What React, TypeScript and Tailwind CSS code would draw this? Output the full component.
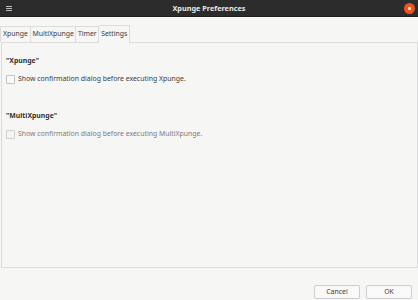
export default function App() {
  const font = { fontFamily: '"Noto Sans", "DejaVu Sans", sans-serif' };
  return (
    <div className="flex h-[300px] w-[418px] flex-col overflow-hidden bg-[#f6f6f5] text-[#3c3c3c]" style={font}>
      <div className="relative flex h-[17px] items-center justify-center bg-[#2c2c2c] border-b border-[#1d1d1d]">
        <div className="absolute left-[6px] top-[6px] flex flex-col gap-[1px]">
          <div className="h-[1px] w-[6px] bg-[#bdbdbd]" />
          <div className="h-[1px] w-[6px] bg-[#bdbdbd]" />
          <div className="h-[1px] w-[6px] bg-[#bdbdbd]" />
        </div>
        <span className="text-[7.3px] font-bold text-[#e8e8e8]">Xpunge Preferences</span>
        <div className="absolute right-[3px] top-[3px] flex h-[11px] w-[11px] items-center justify-center rounded-full bg-[#e95420]">
          <div className="h-[3px] w-[3px] bg-[#f7d0c0]" />
        </div>
      </div>

      <div className="mt-[8px] flex h-[17px] items-end text-[6.9px]">
        <div className="flex h-[16px] items-center border border-b-0 border-[#dcdcdc] px-[2px]">Xpunge</div>
        <div className="flex h-[16px] items-center border border-b-0 border-l-0 border-[#dcdcdc] px-[1.5px]">MultiXpunge</div>
        <div className="flex h-[16px] items-center border border-b-0 border-l-0 border-[#dcdcdc] px-[1.5px]">Timer</div>
        <div className="-mb-[1px] flex h-[18px] items-center border border-b-0 border-l-0 border-[#dcdcdc] bg-[#f6f6f5] px-[2px] relative z-10">Settings</div>
      </div>

      <div className="ml-[1px] h-[226px] w-[417px] border border-[#dcdcdc] px-[4px] pt-[13px] text-[6.9px]">
        <div className="font-bold text-[#333]">"Xpunge"</div>
        <label className="mt-[8px] flex items-center gap-[3px]">
          <span className="h-[9px] w-[9px] rounded-[1px] border border-[#c2c2c2] bg-[#fafafa]" />
          <span>Show confirmation dialog before executing Xpunge.</span>
        </label>
        <div className="mt-[26px] font-bold text-[#333]">"MultiXpunge"</div>
        <label className="mt-[8px] flex items-center gap-[3px] text-[#7c7c7c]">
          <span className="h-[9px] w-[9px] rounded-[1px] border border-[#d0d0d0] bg-[#f4f4f4]" />
          <span>Show confirmation dialog before executing MultiXpunge.</span>
        </label>
      </div>

      <div className="mt-[17px] flex justify-end gap-[6px] pr-[6px] text-[6.9px]">
        <button className="h-[14px] w-[46px] rounded-[2px] border border-[#cfcfcf] bg-[#f9f9f9]">Cancel</button>
        <button className="h-[14px] w-[46px] rounded-[2px] border border-[#cfcfcf] bg-[#f9f9f9]">OK</button>
      </div>
    </div>
  );
}
